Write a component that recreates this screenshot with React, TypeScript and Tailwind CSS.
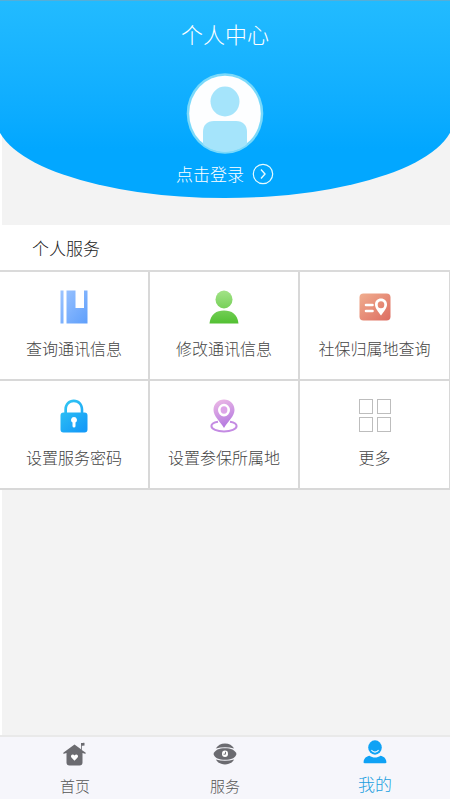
import type { ReactNode } from "react";

function BookIcon() {
  return (
    <svg width="28" height="34" viewBox="0 0 28 34" aria-hidden="true">
      <defs>
        <linearGradient id="book" x1="0" y1="0" x2="1" y2="1">
          <stop offset="0" stopColor="#9cc4ff" />
          <stop offset="1" stopColor="#5f9ffb" />
        </linearGradient>
      </defs>
      <path d="M0.5 0.5h3v33h-3zM6.500 0.5h9v17.500h8.500V0.500h3.500v33h-21z" fill="url(#book)" />
    </svg>
  );
}

function PersonIcon() {
  return (
    <svg width="30" height="34" viewBox="0 0 30 34" aria-hidden="true">
      <defs>
        <linearGradient id="person" x1="0" y1="0" x2="0.800" y2="34" gradientUnits="userSpaceOnUse">
          <stop offset="0" stopColor="#a5e48a" />
          <stop offset="1" stopColor="#52c032" />
        </linearGradient>
      </defs>
      <ellipse cx="15" cy="9.500" rx="8.500" ry="9" fill="url(#person)" />
      <path d="M0.500 33.500C1.500 24 7.500 20.500 15 20.500S28.500 24 29.500 33.500z" fill="url(#person)" />
    </svg>
  );
}

function CardIcon() {
  return (
    <svg width="32" height="28" viewBox="0 0 32 28" aria-hidden="true">
      <defs>
        <linearGradient id="card" x1="0" y1="0" x2="1" y2="1">
          <stop offset="0" stopColor="#f0ae8f" />
          <stop offset="1" stopColor="#dd6c61" />
        </linearGradient>
      </defs>
      <rect x="0.500" y="0.500" width="31" height="27" rx="4" fill="url(#card)" />
      <path d="M7 12h6.500M7 18h6.500" stroke="#fff" strokeWidth="2.600" strokeLinecap="round" />
      <path
        fillRule="evenodd"
        d="M22 5.500c-3.500 0-6 2.600-6 5.900 0 4 3.500 7.200 6 11.100 2.500-3.900 6-7.100 6-11.100 0-3.300-2.500-5.900-6-5.900zm0 2.700a3.300 3.500 0 1 1 0 7 3.300 3.500 0 0 1 0-7z"
        fill="#fff"
      />
    </svg>
  );
}

function LockIcon() {
  return (
    <svg width="28" height="34" viewBox="0 0 28 34" aria-hidden="true">
      <defs>
        <linearGradient id="lock" x1="0" y1="0" x2="0.700" y2="1">
          <stop offset="0" stopColor="#35cbf2" />
          <stop offset="1" stopColor="#159bf8" />
        </linearGradient>
      </defs>
      <path
        fillRule="evenodd"
        d="M4.300 13.500v-3C4.300 4.500 8.500 0.500 13.800 0.500s9.500 4 9.500 10v3h1.200a3 3 0 0 1 3 3v14a3 3 0 0 1-3 3h-21a3 3 0 0 1-3-3v-14a3 3 0 0 1 3-3zM7 13.500h13.700v-3c0-4.300-2.800-7.200-6.900-7.200S7 6.200 7 10.500zM14 18a3 3 0 0 0-1.500 5.600v3.400a1.500 1.500 0 0 0 3 0v-3.400A3 3 0 0 0 14 18z"
        fill="url(#lock)"
      />
    </svg>
  );
}

function PinIcon() {
  return (
    <svg width="28" height="34" viewBox="0 0 28 34" aria-hidden="true">
      <defs>
        <linearGradient id="pin" x1="0" y1="0" x2="0.300" y2="1">
          <stop offset="0" stopColor="#efbce6" />
          <stop offset="1" stopColor="#b67ce0" />
        </linearGradient>
      </defs>
      <path
        fillRule="evenodd"
        d="M14 0.500C8 0.500 3.500 5 3.500 11c0 6.500 6.500 11 10.500 18 4-7 10.500-11.500 10.500-18C24.500 5 20 0.500 14 0.500zm0 4.300a6 6.300 0 1 1 0 12.600 6 6.300 0 0 1 0-12.600z"
        fill="url(#pin)"
      />
      <ellipse cx="14" cy="11" rx="3.400" ry="3.700" fill="#dda5e8" />
      <path
        d="M8 22.800C4 23.500 1.400 25 1.400 27c0 3 5.600 5.400 12.600 5.400S26.600 30 26.600 27c0-2-2.600-3.500-6.600-4.200"
        fill="none"
        stroke="#c48be3"
        strokeWidth="2"
      />
    </svg>
  );
}

function MoreIcon() {
  return (
    <svg width="32" height="34" viewBox="0 0 32 34" fill="none" stroke="#bdbdbd" aria-hidden="true">
      <rect x="0.500" y="0.500" width="13" height="14" />
      <rect x="18.500" y="0.500" width="13" height="14" />
      <rect x="0.500" y="18.500" width="13" height="14" />
      <rect x="18.500" y="18.500" width="13" height="14" />
    </svg>
  );
}

function HomeIcon() {
  return (
    <svg width="24" height="24" viewBox="0 0 24 24" aria-hidden="true">
      <path
        d="M11.500 2.500 0.600 10.600c-.8.700-.4 1.300.4 1.100L3.500 11v9.500a3 3 0 0 0 3 3h10a3 3 0 0 0 3-3V11l2.500.7c.8.200 1.100-.5.400-1.100L18.800 7.900V3.600c1 .7 1.700-.4 2.700.1V0.900c-1.100-.6-2.300.5-3.500.1v6.200z"
        fill="#6b6b70"
      />
      <path d="M11.500 18.700 8.400 15.500c-1.600-1.900 1.300-4.300 3.100-2 1.800-2.300 4.700.1 3.100 2z" fill="#fff" />
    </svg>
  );
}

function ServiceIcon() {
  return (
    <svg width="24" height="22" viewBox="0 0 24 22" aria-hidden="true">
      <path d="M2.800 5.600C4.600 2.500 8 0.600 12 0.600s7.400 1.900 9.200 5C15 3.900 9 3.900 2.800 5.600z" fill="#6b6b70" />
      <path d="M2.800 16.400c1.800 3.100 5.200 5 9.200 5s7.400-1.900 9.200-5c-6.200 1.700-12.200 1.700-18.400 0z" fill="#6b6b70" />
      <path d="M0.500 11C1.800 6.900 6 5.200 12 5.200S22.200 6.900 23.500 11C22.200 15.100 18 16.800 12 16.800S1.800 15.100 0.500 11z" fill="#6b6b70" />
      <ellipse cx="12" cy="10.800" rx="3" ry="3.300" fill="#fff" />
      <path d="M12.500 8.800v2.400h-2" fill="none" stroke="#6b6b70" strokeWidth="0.900" />
    </svg>
  );
}

function MineIcon() {
  return (
    <svg width="24" height="24" viewBox="0 0 24 24" aria-hidden="true">
      <ellipse cx="12" cy="7.500" rx="6.800" ry="7.200" fill="#0fa2f5" />
      <path d="M8.800 10.500c1.600 2.100 4.800 2.100 6.400 0" fill="none" stroke="#fff" strokeWidth="1.200" strokeLinecap="round" />
      <path
        d="M6.500 15.800C3.500 16.500 1 18 0.600 22c0 .8.300 1.200 1 1.200h20.800c.7 0 1-.4 1-1.200-.4-4-2.900-5.500-5.900-6.200-3.200 2.400-7.800 2.400-11 0z"
        fill="#0fa2f5"
      />
    </svg>
  );
}

function Avatar() {
  return (
    <svg width="78" height="81" viewBox="0 0 78 81" className="block" aria-hidden="true">
      <defs>
        <clipPath id="face">
          <ellipse cx="39" cy="40.500" rx="36.500" ry="38.500" />
        </clipPath>
      </defs>
      <ellipse cx="39" cy="40.500" rx="38.300" ry="40.300" fill="#7ad9fa" />
      <ellipse cx="39" cy="40.500" rx="35.800" ry="37.800" fill="#fdfeff" />
      <g fill="#a5e4fb" clipPath="url(#face)">
        <ellipse cx="39" cy="28.500" rx="14.500" ry="15" />
        <path d="M17 81V59c0-7 4-11 11-11h22c7 0 11 4 11 11v22z" />
      </g>
    </svg>
  );
}

const services: { label: string; icon: ReactNode }[] = [
  { label: "查询通讯信息", icon: <BookIcon /> },
  { label: "修改通讯信息", icon: <PersonIcon /> },
  { label: "社保归属地查询", icon: <CardIcon /> },
  { label: "设置服务密码", icon: <LockIcon /> },
  { label: "设置参保所属地", icon: <PinIcon /> },
  { label: "更多", icon: <MoreIcon /> },
];

const tabs: { label: string; icon: ReactNode; active?: boolean }[] = [
  { label: "首页", icon: <HomeIcon /> },
  { label: "服务", icon: <ServiceIcon /> },
  { label: "我的", icon: <MineIcon />, active: true },
];

export default function App() {
  return (
    <div className="flex min-h-screen flex-col bg-[linear-gradient(to_right,#fff_2px,#f3f3f3_2px)] font-['Noto_Sans_CJK_SC',sans-serif] font-light">
      <header className="overflow-hidden">
        <div className="-mx-1 flex flex-col items-center rounded-b-[50%_80px] border-t border-[#55aed8] bg-linear-to-b from-[#22bbff] to-[#02a7ff] to-75% pb-2 text-white">
          <h1 className="pt-4 text-[22px] leading-8 font-light">个人中心</h1>
          <div className="pt-6">
            <Avatar />
          </div>
          <button type="button" className="mt-1 flex items-center gap-2 text-[17px] leading-8">
            点击登录
            <svg width="22" height="22" viewBox="0 0 22 22" fill="none" stroke="#e6fbff" aria-hidden="true">
              <circle cx="11" cy="11" r="9.700" strokeWidth="1.200" />
              <path d="m9 6.500 4 4.500-4 4.500" strokeWidth="1.400" />
            </svg>
          </button>
        </div>
      </header>

      <main className="flex-1 pt-[27px]">
        <section className="bg-white">
          <h2 className="px-8 pt-[7px] pb-1.5 text-[17px] leading-8 font-light text-[#222]">个人服务</h2>
          <div className="grid grid-cols-3 border-t-2 border-[#dadada]">
            {services.map((item) => (
              <button
                key={item.label}
                type="button"
                className="flex h-[109px] flex-col items-center border-r-2 border-b-2 border-[#d8d8d8] bg-white pt-[18px] text-base text-[#444] last:border-r nth-3:border-r"
              >
                <span className="flex h-[34px] items-center">{item.icon}</span>
                <span className="mt-2.5 leading-7">{item.label}</span>
              </button>
            ))}
          </div>
        </section>
      </main>

      <nav className="grid h-[65px] grid-cols-3 border-t-2 border-b border-t-[#e9e9e9] border-b-white bg-[#f6f6fb]">
        {tabs.map((tab) => (
          <a
            key={tab.label}
            href="#"
            aria-current={tab.active ? "page" : undefined}
            className={
              tab.active
                ? "flex flex-col items-center pt-[3px] text-[17px] text-[#1b9fdf]"
                : "flex flex-col items-center pt-[5px] text-[15px] text-[#555]"
            }
          >
            <span className="flex h-6 items-center">{tab.icon}</span>
            <span className="mt-2 leading-6">{tab.label}</span>
          </a>
        ))}
      </nav>
    </div>
  );
}
